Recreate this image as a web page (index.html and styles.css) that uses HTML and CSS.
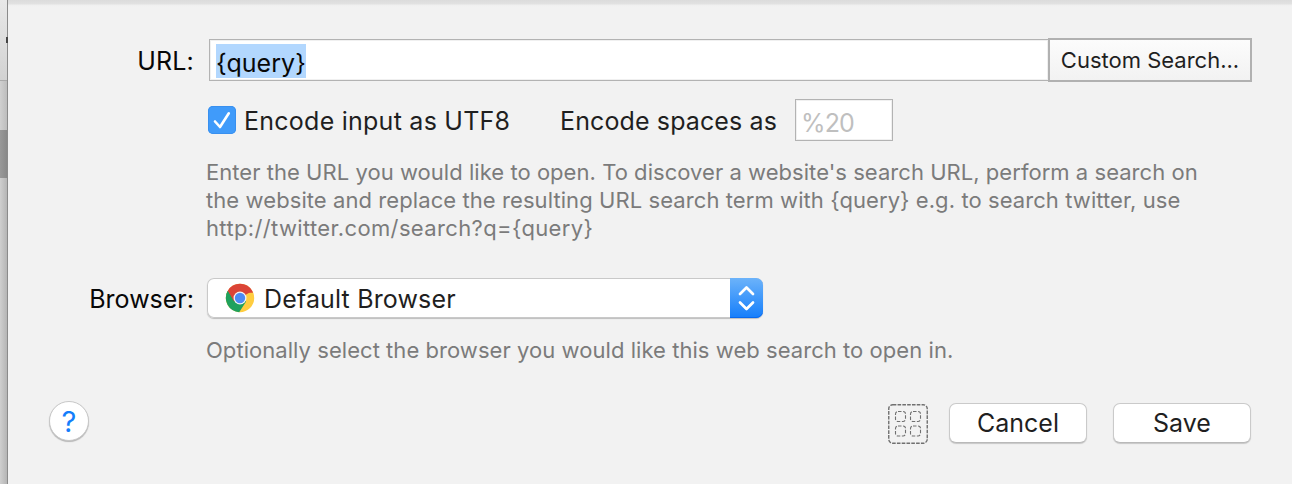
FILE: index.html
```html
<!DOCTYPE html>
<html lang="en">
<head>
<meta charset="utf-8">
<title>Web Search</title>
<link rel="stylesheet" href="styles.css">
</head>
<body>
<div class="window">
  <aside class="backdrop">
    <div class="backdrop-title"><span class="backdrop-mark"></span></div>
    <div class="backdrop-tools"></div>
    <div class="backdrop-selected"></div>
    <div class="backdrop-rest"></div>
  </aside>
  <main class="sheet">
    <div class="row url-row">
      <label class="label url-label">URL:</label>
      <div class="field url-field"><span class="selection"><span class="t-query">{query}</span></span></div>
      <button class="custom-search"><span class="t-custom">Custom Search...</span></button>
    </div>
    <div class="row encode-row">
      <span class="checkbox"><svg width="28" height="28" viewBox="0 0 28 28"><path d="M7 15.5 L12 21 L20.8 7.3" fill="none" stroke="#fff" stroke-width="2.6" stroke-linecap="round" stroke-linejoin="round"/></svg></span>
      <span class="text t-utf">Encode input as UTF8</span>
      <span class="text t-spaces">Encode spaces as</span>
      <div class="field spaces-field"><span class="t-percent">%20</span></div>
    </div>
    <div class="note url-note">
      <div class="n1">Enter the URL you would like to open. To discover a website's search URL, perform a search on</div>
      <div class="n2">the website and replace the resulting URL search term with {query} e.g. to search twitter, use</div>
      <div class="n3">http://twitter.com/search?q={query}</div>
    </div>
    <div class="row browser-row">
      <label class="label browser-label">Browser:</label>
      <div class="select">
        <svg class="chrome" width="30" height="30" viewBox="0 0 30 30">
          <circle cx="15" cy="15" r="14.2" fill="#ffcd40"/>
          <path d="M15 15 L2.7 7.9 A14.2 14.2 0 0 0 14.2 29.2 L21.1 18.5Z" fill="#1fa15d"/>
          <path d="M15 15 L8.9 18.5 L2.7 7.9 A14.2 14.2 0 0 1 27.3 8Z" fill="#db4437"/>
          <path d="M15 8 H27.3 L28 9.8 H15Z" fill="#db4437"/>
          <path d="M8.9 18.5 L2.7 7.9 L1.4 11 L2.4 20Z" fill="#1fa15d"/>
          <circle cx="15" cy="15" r="6.5" fill="#f4f4f4"/>
          <circle cx="15" cy="15" r="5.2" fill="#4c8bf5"/>
        </svg>
        <span class="t-default">Default Browser</span>
        <span class="stepper"><svg width="33" height="40" viewBox="0 0 33 40"><path d="M10 16 L16.5 9.5 L23 16 M10 24.5 L16.5 31 L23 24.5" fill="none" stroke="#fff" stroke-width="2.7" stroke-linecap="round" stroke-linejoin="round"/></svg></span>
      </div>
    </div>
    <div class="note browser-note"><div class="n4">Optionally select the browser you would like this web search to open in.</div></div>
    <footer class="row footer">
      <button class="help"><span>?</span></button>
      <svg class="grid-icon" width="40" height="40" viewBox="0 0 40 40" fill="none" stroke="#707070">
        <rect x=".75" y=".75" width="38.5" height="38.5" rx="4" stroke-width="1.4" stroke-dasharray="3.6 1.2"/>
        <g stroke-width="1.1" stroke-dasharray="3.5 1.6">
          <rect x="7.5" y="7.5" width="10" height="10" rx="2.5"/>
          <rect x="22.5" y="7.5" width="10" height="10" rx="2.5"/>
          <rect x="7.5" y="22" width="10" height="10" rx="2.5"/>
          <rect x="22.5" y="22" width="10" height="10" rx="2.5"/>
        </g>
      </svg>
      <button class="push"><span class="t-cancel">Cancel</span></button>
      <button class="push save"><span class="t-save">Save</span></button>
    </footer>
  </main>
</div>
</body>
</html>
```
FILE: styles.css
```css
* { box-sizing: border-box; }
body { margin: 0; overflow: hidden; font-family: Inter, sans-serif; font-size: 25px; font-weight: 430; color: #1f1f1f; }
button { font: inherit; color: inherit; padding: 0; margin: 0; display: flex; justify-content: center; align-items: center; }
svg { display: block; flex: none; }
.window { display: flex; width: 1292px; height: 484px; }
.backdrop { display: flex; flex-direction: column; width: 8px; flex: none; border-right: 1px solid #8b8b8b; box-shadow: inset -1px 0 1px rgba(0,0,0,.15); }
.backdrop-title { height: 81px; padding: 37px 0 0 6px; background: linear-gradient(#e8e8e8, #d2d2d2); border-bottom: 1px solid #aaa; }
.backdrop-mark { display: block; width: 2px; height: 6px; background: #444; }
.backdrop-tools { height: 49px; background: linear-gradient(90deg, #d0d0d0, #bdbdbd); }
.backdrop-selected { height: 48px; background: linear-gradient(90deg, #999, #898989); }
.backdrop-rest { flex: 1; background: linear-gradient(90deg, #cfcfcf, #b5b5b5); }
.sheet { flex: 1; background: linear-gradient(#dcdcdc, #e2e2e2 4px, #efefef 5px, #f2f2f2 7px); padding-top: 38px; }
.row { display: flex; white-space: nowrap; }
.label { width: 186px; text-align: right; flex: none; color: #080808; padding-top: 2px; }
.url-label { letter-spacing: .2px; }
.field { background: #fff; border: 1px solid #b3b3b3; box-shadow: inset 0 0 0 1px #f0f0f0; height: 42px; }
.url-row { height: 44px; align-items: center; }
.url-field { margin-left: 15px; width: 839px; display: flex; padding: 4px 0 0 6px; border-right: 0; }
.selection { width: 90px; height: 34px; background: #b2d7fe; line-height: 38px; color: #080808; }
.t-query { letter-spacing: .05px; }
.custom-search { width: 204px; height: 44px; border: 2px solid #b1b1b1; background: linear-gradient(#fcfcfc, #f2f2f2); font-size: 22px; }
.encode-row { margin-top: 17px; height: 42px; align-items: center; padding-left: 200px; }
.checkbox { width: 28px; height: 28px; border-radius: 5px; background: #409bfa; box-shadow: inset 0 0 0 1px #3990ef; }
.text { padding-top: 2px; }
.t-utf { margin-left: 8px; width: 316px; letter-spacing: .25px; }
.t-spaces { width: 235px; letter-spacing: .12px; }
.spaces-field { width: 98px; padding-left: 5px; color: #bfbfbf; line-height: 46px; letter-spacing: -.9px; }
.note { margin-left: 198px; color: #7b7b7b; font-size: 22px; font-weight: 420; line-height: 28px; white-space: nowrap; }
.n1 { letter-spacing: .04px; }
.n2 { letter-spacing: .08px; }
.n3 { letter-spacing: .36px; }
.n4 { letter-spacing: .05px; }
.url-note { margin-top: 17px; }
.browser-row { margin-top: 36px; height: 40px; align-items: center; }
.select { display: flex; align-items: center; margin-left: 13px; width: 556px; height: 40px; border-radius: 7px; background: #fff; box-shadow: inset 0 0 0 1px #c9c9c9, 0 1px 1px rgba(0,0,0,.22); padding-left: 18px; }
.t-default { margin-left: 9px; padding-top: 2px; letter-spacing: .15px; }
.stepper { margin-left: auto; width: 33px; height: 40px; border-radius: 0 7px 7px 0; background: linear-gradient(#6cb3fa, #157efb); box-shadow: inset 0 -1px 0 #0869ee; }
.browser-note { margin-top: 18px; }
.footer { margin-top: 36px; padding-left: 41px; height: 46px; }
.help { margin-top: 1px; width: 40px; height: 40px; border: 1px solid #c8c8c8; border-radius: 50%; background: #fff; box-shadow: 0 1px 1px rgba(0,0,0,.25); color: #147efb; font-size: 29px; }
.grid-icon { margin: 4px 0 0 799px; }
.push { margin: 3px 0 0 21px; width: 138px; height: 40px; border: 1px solid #cacaca; border-bottom-color: #b9b9b9; border-radius: 7px; background: #fff; box-shadow: 0 1px 1px rgba(0,0,0,.18); }
.save { margin-left: 26px; }
```
